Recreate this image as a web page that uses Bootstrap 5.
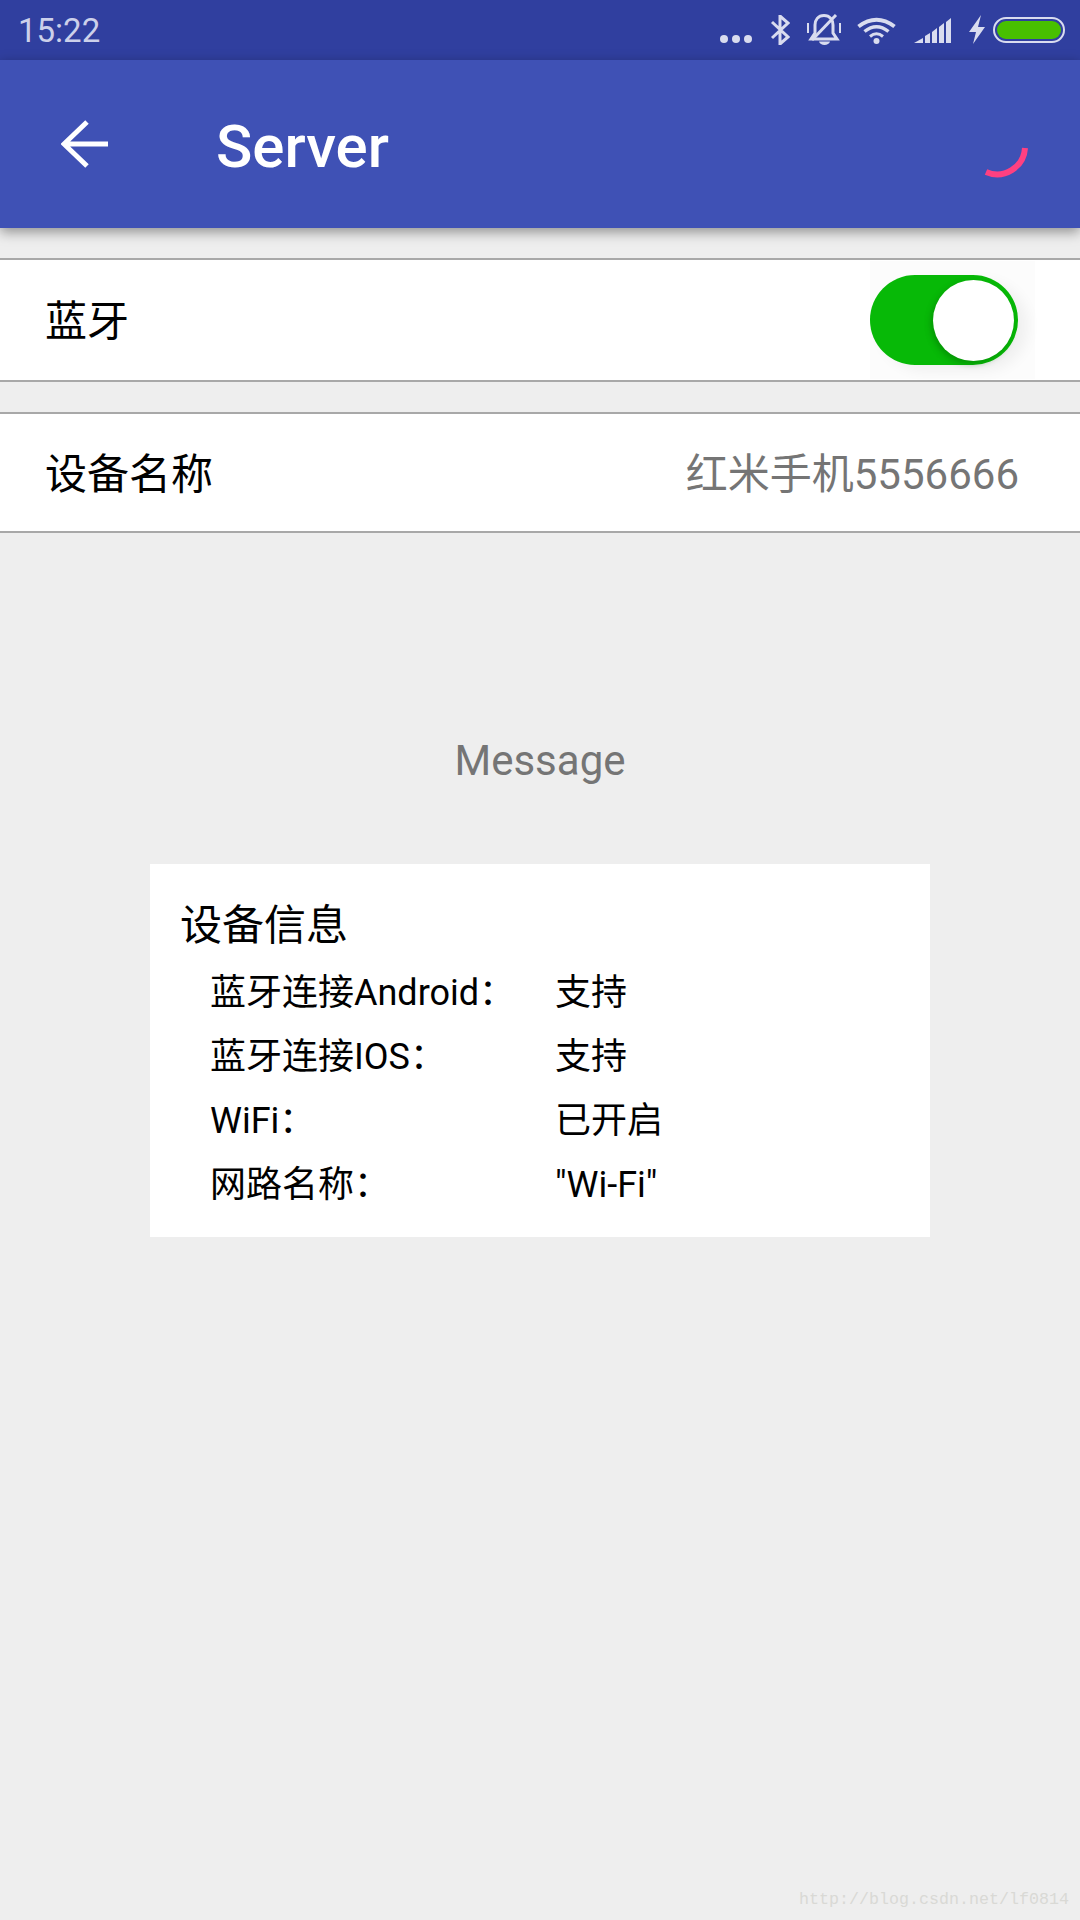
<!DOCTYPE html>
<html lang="zh-CN">
<head>
  <meta charset="UTF-8">
  <meta name="viewport" content="width=device-width, initial-scale=1">
  <title>Server</title>
  <link href="https://cdn.jsdelivr.net/npm/bootstrap@5.3.0/dist/css/bootstrap.min.css" rel="stylesheet">
  <style>
    body {
      background-color: #eeeeee;
      font-family: Roboto, "Noto Sans CJK SC", sans-serif;
      color: #000;
      min-height: 1920px;
    }
    .status-strip {
      height: 60px;
      background-color: #303f9f;
      color: #ccd0ea;
      padding-left: 18px;
      padding-right: 15px;
      font-size: 33px;
    }
    .status-time { padding-top: 2px; }
    .status-icons { gap: 18px; }
    .status-icons svg { display: block; fill: #d9dcef; }
    .status-icons .status-bell { margin-left: -1px; }
    .status-icons .status-wifi { margin-left: -2px; }
    .status-icons .status-batt { margin-left: -10px; }
    .app-toolbar {
      height: 168px;
      background-color: #3f51b5;
      color: #fff;
      padding-left: 61px;
      padding-right: 35px;
      box-shadow: 0 4px 12px rgba(0, 0, 0, .4);
    }
    .app-title {
      font-size: 60px;
      font-weight: 500;
      margin-left: 107px;
      padding-top: 5px;
      line-height: 1;
    }
    .setting-row {
      background-color: #fff;
      border-top: 2px solid #a8a8a8;
      border-bottom: 2px solid #a8a8a8;
      padding: 0 61px 0 45px;
      font-size: 42px;
      line-height: 1;
    }
    .setting-text { padding-top: 4px; }
    .row-switch { height: 124px; margin-top: 30px; }
    .row-name { height: 121px; margin-top: 30px; }
    .name-value { color: #757575; padding-top: 4px; }
    .switch-halo {
      width: 165px;
      height: 118px;
      margin-right: -16px;
      background-color: #fcfcfc;
      padding: 0 17px 0 0;
    }
    .switch-track {
      width: 148px;
      height: 90px;
      border-radius: 45px;
      background-color: #07b907;
      padding: 4px;
      box-shadow: 10px 6px 14px rgba(0, 0, 0, .05);
    }
    .switch-knob {
      width: 81px;
      height: 81px;
      border-radius: 50%;
      background-color: #fff;
      box-shadow: -2px 3px 6px rgba(0, 80, 0, .35);
    }
    .message-label {
      margin-top: 200px;
      font-size: 42px;
      line-height: 56px;
      color: #757575;
    }
    .info-panel {
      width: 780px;
      height: 373px;
      margin-top: 75px;
      background-color: #fff;
      padding: 37px 0 0 30px;
    }
    .info-title { font-size: 42px; line-height: 50px; margin-bottom: 10px; }
    .info-line { height: 64px; padding-left: 30px; font-size: 36px; align-items: center; }
    .info-key { width: 345px; }
    .csdn-mark {
      font-family: "Liberation Mono", monospace;
      font-size: 16.67px;
      line-height: 20px;
      color: #d9d9d5;
      padding: 0 11px 10px 0;
    }
  </style>
</head>
<body class="d-flex flex-column">

  <!-- Status bar -->
  <div class="status-strip d-flex align-items-center justify-content-between">
    <span class="status-time">15:22</span>
    <div class="status-icons d-flex align-items-center">
      <svg width="32" height="30" viewBox="0 0 32 30"><circle cx="4" cy="24" r="4"/><circle cx="16" cy="24" r="4"/><circle cx="28" cy="24" r="4"/></svg>
      <svg width="20" height="30" viewBox="0 0 20 30"><path d="M2 7 L18 22 L10 29 V1 L18 8 L2 23" fill="none" stroke="#d9dcef" stroke-width="3"/></svg>
      <svg width="34" height="32" viewBox="0 0 34 32" class="status-bell"><path d="M17 1.5 C11 1.5 8 6 8 11 V19 L4 25 H30 L26 19 V11 C26 6 23 1.5 17 1.5 Z" fill="none" stroke="#d9dcef" stroke-width="3"/><path d="M12 27.5 H23 C22 32 13 32 12 27.5 Z"/><path d="M5 26 L29 1" stroke="#d9dcef" stroke-width="3"/><rect x="0" y="9" width="2" height="10"/><rect x="32" y="9" width="2" height="10"/></svg>
      <svg width="39" height="27" viewBox="0 0 39 27" class="status-wifi"><path d="M1.5 9.5 Q19.5 -4 37.5 9.5" fill="none" stroke="#d9dcef" stroke-width="4"/><path d="M7.5 14.5 Q19.5 5 31.5 14.5" fill="none" stroke="#d9dcef" stroke-width="3.5"/><path d="M13 19.5 Q19.5 14 26 19.5" fill="none" stroke="#d9dcef" stroke-width="3"/><circle cx="19.5" cy="24" r="3"/></svg>
      <svg width="37" height="25" viewBox="0 0 37 25"><path d="M0 25 L9 20 V25 Z"/><path d="M11 25 V18 L16 15 V25 Z"/><path d="M18 25 V14 L23 10 V25 Z"/><path d="M25 25 V9 L30 5 V25 Z"/><path d="M32 25 V4 L37 0 V25 Z"/></svg>
      <svg width="16" height="30" viewBox="0 0 16 30"><path d="M12 0 L0 17 H7 L4 29 L16 12 H9 Z"/></svg>
      <svg width="72" height="26" viewBox="0 0 72 26" class="status-batt"><rect x="1" y="1" width="70" height="24" rx="12" fill="none" stroke="#d9dcef" stroke-width="2"/><rect x="4" y="4" width="64" height="18" rx="9" fill="#48c000"/></svg>
    </div>
  </div>

  <!-- Toolbar -->
  <div class="app-toolbar d-flex align-items-center">
    <svg width="48" height="48" viewBox="0 0 48 48"><path d="M47 24 H3 M26 2 L3 24 L26 46" fill="none" stroke="#fff" stroke-width="5"/></svg>
    <div class="app-title flex-grow-1">Server</div>
    <svg width="80" height="80" viewBox="0 0 80 80"><path d="M60 44 A28 28 0 0 1 21 68" fill="none" stroke="#ff4081" stroke-width="6"/></svg>
  </div>

  <!-- Settings -->
  <div class="setting-row row-switch d-flex align-items-center justify-content-between">
    <span class="setting-text">蓝牙</span>
    <div class="switch-halo d-flex align-items-center justify-content-end">
      <div class="switch-track d-flex align-items-center justify-content-end">
        <div class="switch-knob"></div>
      </div>
    </div>
  </div>
  <div class="setting-row row-name d-flex align-items-center justify-content-between">
    <span class="setting-text">设备名称</span>
    <span class="name-value">红米手机5556666</span>
  </div>

  <div class="message-label text-center">Message</div>

  <!-- Device info -->
  <div class="info-panel mx-auto">
    <div class="info-title">设备信息</div>
    <div class="info-line d-flex"><span class="info-key">蓝牙连接Android：</span><span>支持</span></div>
    <div class="info-line d-flex"><span class="info-key">蓝牙连接IOS：</span><span>支持</span></div>
    <div class="info-line d-flex"><span class="info-key">WiFi：</span><span>已开启</span></div>
    <div class="info-line d-flex"><span class="info-key">网路名称：</span><span>"Wi-Fi"</span></div>
  </div>

  <div class="csdn-mark mt-auto text-end">http://blog.csdn.net/lf0814</div>

  <script src="https://cdn.jsdelivr.net/npm/bootstrap@5.3.0/dist/js/bootstrap.bundle.min.js"></script>
</body>
</html>
